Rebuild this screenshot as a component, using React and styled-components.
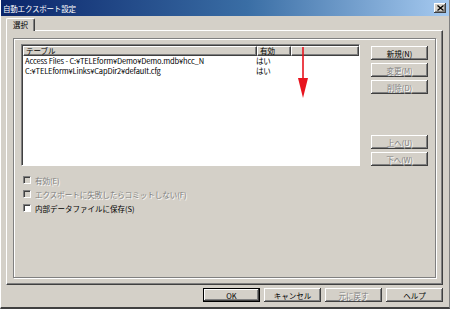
import React from 'react';
import styled, { createGlobalStyle } from 'styled-components';

const GlobalStyle = createGlobalStyle`
  html, body {
    margin: 0;
    padding: 0;
    background: #d4d0c8;
  }
  body {
    font-family: "Noto Sans CJK JP", "DejaVu Sans", sans-serif;
    font-size: 7.5px;
    color: #000;
  }
`;

const Window = styled.div`
  position: relative;
  width: 450px;
  height: 309px;
  box-sizing: border-box;
  background: #d4d0c8;
  border-left: 1px solid #ffffff;
  border-bottom: 2px solid #404040;
  border-right: 1px solid #808080;
  display: flex;
  flex-direction: column;
  overflow: hidden;
`;

const TitleBar = styled.div`
  height: 16px;
  display: flex;
  align-items: center;
  justify-content: space-between;
  padding: 0 3px 0 2px;
  background: linear-gradient(to right, #0a246a 0%, #3a6ea5 55%, #a6caf0 100%);
  color: #fff;
  font-size: 7.5px;
  letter-spacing: -0.2px;
`;

const CloseButton = styled.div`
  width: 12px;
  height: 10px;
  background: #d4d0c8;
  box-shadow: inset -1px -1px #404040, inset 1px 1px #fff, inset -2px -2px #808080;
  display: flex;
  align-items: center;
  justify-content: center;
`;

const Body = styled.div`
  display: flex;
  flex-direction: column;
  padding: 2px 6px 0 5px;
`;

const TabRow = styled.div`
  display: flex;
  height: 12px;
  position: relative;
  z-index: 1;
`;

const Tab = styled.div`
  width: 29px;
  height: 13px;
  box-sizing: border-box;
  border-top: 1px solid #fff;
  border-left: 1px solid #fff;
  border-right: 1px solid #404040;
  box-shadow: inset -1px 0 #808080;
  border-radius: 2px 2px 0 0;
  background: #d4d0c8;
  padding: 1px 0 0 6px;
  line-height: 10px;
`;

const TabPanel = styled.div`
  height: 255px;
  box-sizing: border-box;
  border-top: 1px solid #fff;
  border-left: 1px solid #fff;
  border-right: 1px solid #404040;
  border-bottom: 1px solid #404040;
  box-shadow: inset -1px -1px #808080;
  padding: 7px 6px 6px 6px;
  display: flex;
`;

const GroupBox = styled.div`
  flex: 1;
  box-sizing: border-box;
  border: 1px solid #808080;
  box-shadow: inset 1px 1px #fff, 1px 1px #fff;
  padding: 5px 7px 0 7px;
`;

const TopArea = styled.div`
  display: grid;
  grid-template-columns: 339px 57px;
  column-gap: 11px;
`;

const ListBox = styled.div`
  position: relative;
  height: 122px;
  box-sizing: border-box;
  background: #fff;
  border-top: 1px solid #808080;
  border-left: 1px solid #808080;
  border-right: 1px solid #fff;
  border-bottom: 1px solid #fff;
  box-shadow: inset 1px 1px #404040;
`;

const HeaderRow = styled.div`
  display: flex;
  height: 10px;
  margin: 1px 0 0 1px;
`;

const HeaderCell = styled.div`
  width: ${(p) => p.$w}px;
  flex: ${(p) => (p.$fill ? 1 : 'none')};
  box-sizing: border-box;
  background: #d4d0c8;
  border-top: 1px solid #fff;
  border-left: 1px solid #fff;
  border-right: 1px solid #404040;
  border-bottom: 1px solid #404040;
  box-shadow: inset -1px -1px #808080;
  padding-left: 2px;
  line-height: 8px;
  white-space: nowrap;
`;

const DataRow = styled.div`
  display: flex;
  height: 10px;
  line-height: 10px;
  margin-left: 3px;
  white-space: nowrap;
`;

const DataCell = styled.div`
  width: ${(p) => p.$w}px;
  letter-spacing: -0.15px;
`;

const ArrowOverlay = styled.svg`
  position: absolute;
  left: 275px;
  top: 2px;
`;

const SideButtons = styled.div`
  display: flex;
  flex-direction: column;
  padding-top: 2px;
  gap: 3px;
`;

const Button = styled.div`
  height: 14px;
  width: ${(p) => p.$w || 57}px;
  margin-top: ${(p) => p.$gapBefore || 0}px;
  box-sizing: border-box;
  background: #d4d0c8;
  display: flex;
  align-items: center;
  justify-content: center;
  color: ${(p) => (p.$disabled ? '#808080' : '#000')};
  text-shadow: ${(p) => (p.$disabled ? '1px 1px #fff' : 'none')};
  border: ${(p) => (p.$default ? '1px solid #000' : 'none')};
  box-shadow: ${(p) =>
    p.$default
      ? 'inset -1px -1px #404040, inset 1px 1px #fff, inset -2px -2px #808080'
      : 'inset -1px -1px #404040, inset 1px 1px #fff, inset -2px -2px #808080, inset 2px 2px #d4d0c8'};
  white-space: nowrap;
`;

const CheckList = styled.div`
  display: flex;
  flex-direction: column;
  padding: 9px 0 0 2px;
  gap: 4px;
`;

const CheckRow = styled.div`
  display: flex;
  align-items: center;
  height: 10px;
  gap: 4px;
  color: ${(p) => (p.$disabled ? '#808080' : '#000')};
  text-shadow: ${(p) => (p.$disabled ? '1px 1px #fff' : 'none')};
  white-space: nowrap;
`;

const CheckBox = styled.div`
  width: 8px;
  height: 8px;
  box-sizing: border-box;
  background: ${(p) => (p.$disabled ? '#d4d0c8' : '#fff')};
  border-top: 1px solid #808080;
  border-left: 1px solid #808080;
  border-right: 1px solid #fff;
  border-bottom: 1px solid #fff;
  box-shadow: inset 1px 1px #404040;
`;

const Footer = styled.div`
  display: flex;
  justify-content: flex-end;
  gap: 4px;
  padding: 3px 0 0 0;
`;

const App = () => {
  return (
    <>
      <GlobalStyle />
      <Window>
        <TitleBar>
          <span>自動エクスポート設定</span>
          <CloseButton>
            <svg width="7" height="6" viewBox="0 0 7 6">
              <path d="M0.5 0.5 L6.5 5.5 M6.5 0.5 L0.5 5.5" stroke="#000" strokeWidth="1.3" />
            </svg>
          </CloseButton>
        </TitleBar>
        <Body>
          <TabRow>
            <Tab>選択</Tab>
          </TabRow>
          <TabPanel>
            <GroupBox>
              <TopArea>
                <ListBox>
                  <HeaderRow>
                    <HeaderCell $w={234}>テーブル</HeaderCell>
                    <HeaderCell $w={34}>有効</HeaderCell>
                    <HeaderCell $fill />
                  </HeaderRow>
                  <DataRow>
                    <DataCell $w={231}>Access Files - C:¥TELEform¥Demo¥Demo.mdb¥hcc_N</DataCell>
                    <DataCell $w={34}>はい</DataCell>
                  </DataRow>
                  <DataRow>
                    <DataCell $w={231}>C:¥TELEform¥Links¥CapDir2¥default.cfg</DataCell>
                    <DataCell $w={34}>はい</DataCell>
                  </DataRow>
                  <ArrowOverlay width="12" height="52" viewBox="0 0 12 52">
                    <line x1="6" y1="0" x2="6" y2="34" stroke="#e8141e" strokeWidth="1.6" />
                    <path d="M1 31 L11 31 L6 51 Z" fill="#e8141e" />
                  </ArrowOverlay>
                </ListBox>
                <SideButtons>
                  <Button>新規(N)</Button>
                  <Button $disabled>変更(M)</Button>
                  <Button $disabled>削除(D)</Button>
                  <Button $disabled $gapBefore={38}>上へ(U)</Button>
                  <Button $disabled>下へ(W)</Button>
                </SideButtons>
              </TopArea>
              <CheckList>
                <CheckRow $disabled>
                  <CheckBox $disabled />
                  有効(E)
                </CheckRow>
                <CheckRow $disabled>
                  <CheckBox $disabled />
                  エクスポートに失敗したらコミットしない(F)
                </CheckRow>
                <CheckRow>
                  <CheckBox />
                  内部データファイルに保存(S)
                </CheckRow>
              </CheckList>
            </GroupBox>
          </TabPanel>
          <Footer>
            <Button $default>OK</Button>
            <Button>キャンセル</Button>
            <Button $disabled>元に戻す</Button>
            <Button>ヘルプ</Button>
          </Footer>
        </Body>
      </Window>
    </>
  );
};

export default App;
